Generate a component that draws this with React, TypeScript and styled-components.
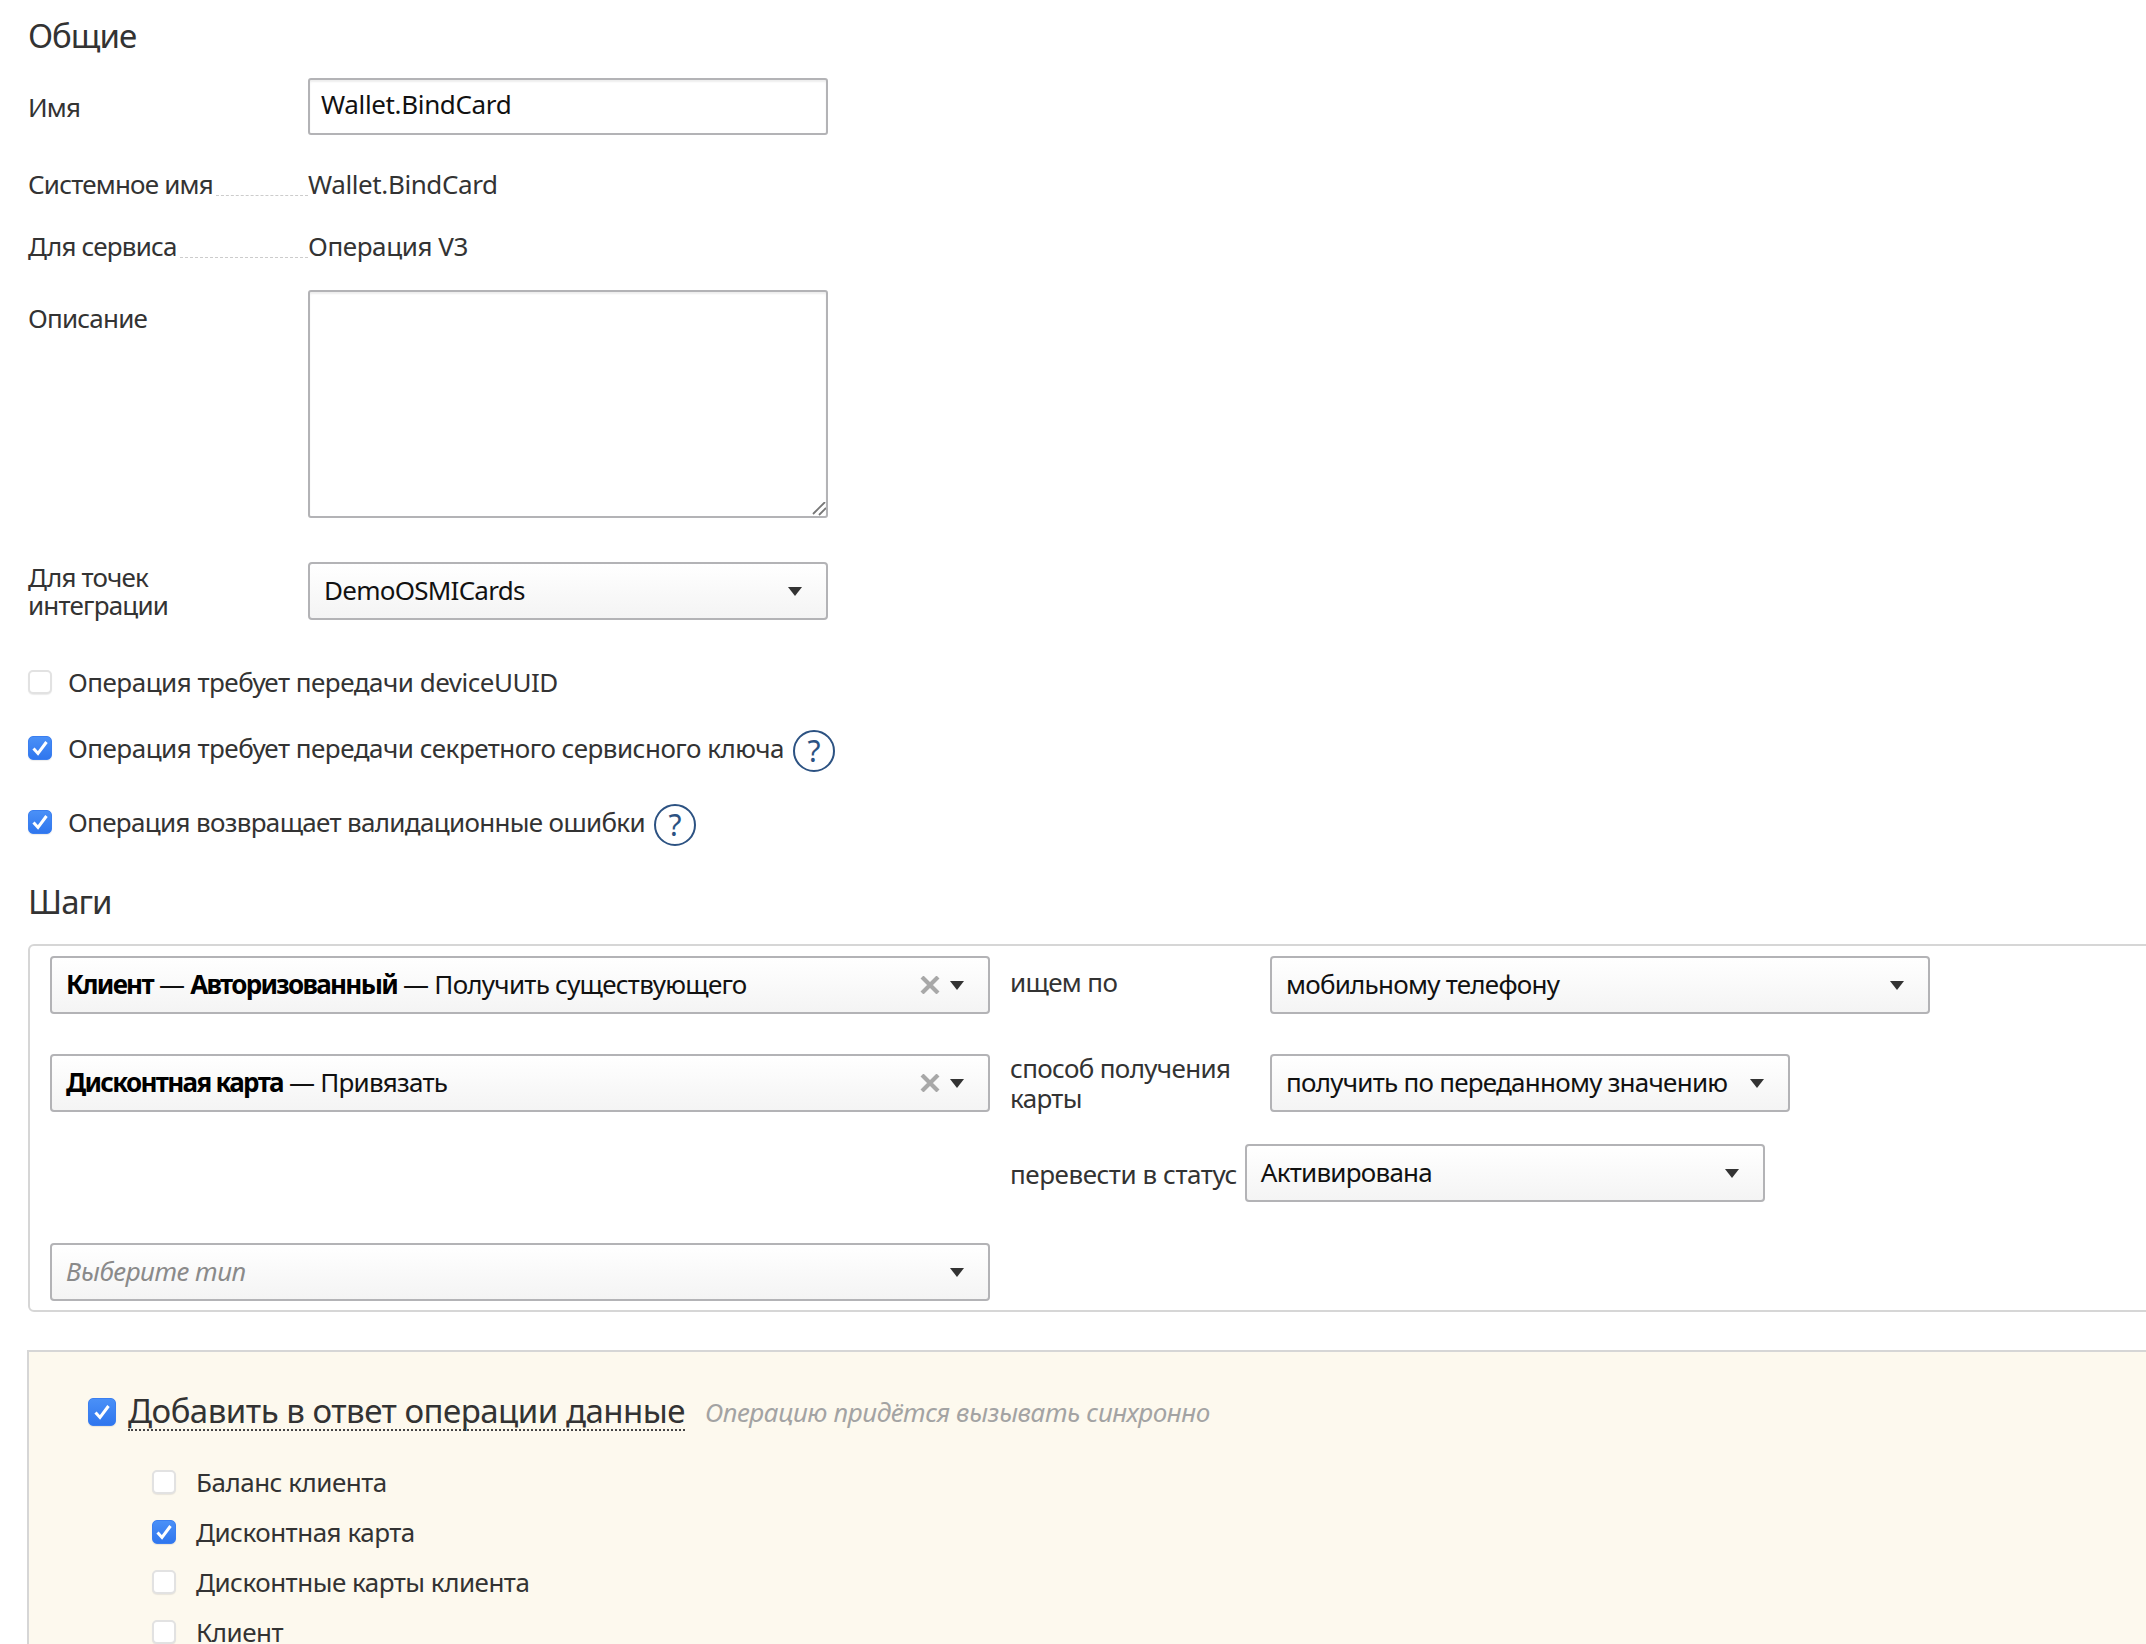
import React from "react";
import styled, { createGlobalStyle } from "styled-components";

const Global = createGlobalStyle`
  html, body { margin: 0; padding: 0; background: #fff; }
  body { font-family: "Noto Sans", "Open Sans", sans-serif; color: #333; overflow: hidden; }
`;

const Page = styled.div`
  height: 1644px;
  overflow: hidden;
  padding-left: 28px;
  font-size: 26px;
  letter-spacing: -0.5px;
`;

const Heading = styled.h2<{ $top: number; $bottom: number }>`
  margin: ${(p) => p.$top}px 0 ${(p) => p.$bottom}px;
  font-size: 33px;
  line-height: 36px;
  font-weight: 400;
  letter-spacing: -1px;
`;

const Row = styled.div<{ $top?: number; $align?: string }>`
  display: flex;
  align-items: ${(p) => p.$align || "center"};
  margin-top: ${(p) => p.$top || 0}px;
`;

const Label = styled.div<{ $pad?: number }>`
  width: 280px;
  flex: none;
  line-height: 28px;
  letter-spacing: -0.8px;
  padding-top: ${(p) => p.$pad || 0}px;
`;

const LeaderRow = styled.div<{ $top: number }>`
  display: flex;
  width: 800px;
  height: 30px;
  line-height: 30px;
  margin-top: ${(p) => p.$top}px;
`;

const LeaderLabel = styled.div`
  display: flex;
  width: 280px;
  flex: none;
  letter-spacing: -0.8px;
  &::after {
    content: "";
    flex: 1;
    margin: 0 0 3px 3px;
    border-bottom: 1px dashed #ccc;
  }
`;

const LeaderValue = styled.div`
  letter-spacing: -0.4px;
`;

const TextInput = styled.div`
  box-sizing: border-box;
  width: 520px;
  height: 57px;
  border: 2px solid #b3b3b6;
  border-radius: 3px;
  box-shadow: inset 0 2px 2px #eee;
  padding: 8px 11px;
  line-height: 32px;
  letter-spacing: -0.35px;
  color: #111;
`;

const TextArea = styled.div`
  box-sizing: border-box;
  position: relative;
  width: 520px;
  height: 228px;
  border: 2px solid #b3b3b6;
  border-radius: 3px;
  box-shadow: inset 0 2px 2px #eee;
`;

const Grip = styled.svg`
  position: absolute;
  right: 0;
  bottom: 0;
`;

const SelectBox = styled.div<{ $w: number }>`
  box-sizing: border-box;
  display: flex;
  align-items: center;
  flex: none;
  width: ${(p) => p.$w}px;
  height: 58px;
  border: 2px solid #b3b3b6;
  border-radius: 4px;
  background: linear-gradient(#fff, #f4f4f4);
  padding: 0 24px 0 14px;
  color: #111;
  letter-spacing: -0.75px;
`;

const SelectText = styled.div`
  flex: 1;
  white-space: nowrap;
  line-height: 30px;
  padding-bottom: 2px;
`;

const Placeholder = styled(SelectText)`
  font-style: italic;
  color: #8a8a8a;
  letter-spacing: -0.45px;
  padding-bottom: 3px;
`;

const Strong = styled.b`
  font-weight: 700;
  color: #000;
  letter-spacing: -1.7px;
`;

const ClearIcon = styled.svg`
  flex: none;
  margin-right: 10px;
`;

const CaretIcon = styled.svg`
  flex: none;
`;

const Caret = () => (
  <CaretIcon width="14" height="9" viewBox="0 0 14 9">
    <path d="M0 0h14L7 9z" fill="#333" />
  </CaretIcon>
);

const Clear = () => (
  <ClearIcon width="20" height="18" viewBox="0 0 20 18">
    <path d="M2 1l16 16M18 1L2 17" stroke="#a8a8a8" strokeWidth="4.2" fill="none" />
  </ClearIcon>
);

const Box = styled.span<{ $on?: boolean; $big?: boolean }>`
  box-sizing: border-box;
  display: inline-flex;
  align-items: center;
  justify-content: center;
  flex: none;
  width: ${(p) => (p.$big ? 28 : 24)}px;
  height: ${(p) => (p.$big ? 28 : 24)}px;
  border-radius: 5px;
  border: ${(p) => (p.$on ? "1px solid #3b7ff0" : "2px solid #e2e2e2")};
  background: ${(p) => (p.$on ? "linear-gradient(#4a90f7, #2f76ee)" : "#fff")};
  box-shadow: 0 1px 1px rgba(0, 0, 0, 0.08);
`;

const Check = ({ on, big }: { on?: boolean; big?: boolean }) => (
  <Box $on={on} $big={big}>
    {on && (
      <svg width="18" height="16" viewBox="0 0 18 16">
        <path d="M2.5 8.5l4.5 5L15.5 2" stroke="#fff" strokeWidth="3" fill="none" />
      </svg>
    )}
  </Box>
);

const CheckRow = styled.div<{ $top: number; $h: number }>`
  display: flex;
  align-items: center;
  height: ${(p) => p.$h}px;
  margin-top: ${(p) => p.$top}px;
  gap: 9px;
`;

const CheckLabel = styled.div<{ $up?: number; $tight?: boolean }>`
  display: flex;
  align-items: center;
  gap: 16px;
  padding-bottom: ${(p) => p.$up || 0}px;
  letter-spacing: ${(p) => (p.$tight ? "-0.67px" : "-0.5px")};
`;

const HelpCircle = styled.span`
  box-sizing: border-box;
  display: inline-flex;
  align-items: center;
  justify-content: center;
  width: 42px;
  height: 42px;
  border: 2px solid #2c5282;
  border-radius: 50%;
  color: #2c5282;
  font-size: 30px;
  letter-spacing: 0;
  padding-bottom: 2px;
`;

const StepsPanel = styled.div`
  box-sizing: border-box;
  width: 2200px;
  border: 2px solid #d6d6d6;
  border-radius: 6px;
  padding: 10px 20px 9px;
`;

const StepRow = styled.div<{ $top?: number }>`
  display: flex;
  align-items: center;
  height: 58px;
  margin-top: ${(p) => p.$top || 0}px;
`;

const StepSpacer = styled.div`
  width: 940px;
  flex: none;
`;

const StepLabel = styled.div<{ $auto?: boolean; $up?: number; $down?: number }>`
  margin-left: 20px;
  width: ${(p) => (p.$auto ? "auto" : "240px")};
  margin-right: ${(p) => (p.$auto ? "8px" : "20px")};
  flex: none;
  line-height: 30px;
  white-space: pre-line;
  letter-spacing: ${(p) => (p.$auto ? "-0.45px" : "-0.65px")};
  padding-bottom: ${(p) => p.$up || 0}px;
  padding-top: ${(p) => p.$down || 0}px;
`;

const ResultPanel = styled.div`
  box-sizing: border-box;
  width: 2200px;
  height: 400px;
  margin: 38px 0 0 -1px;
  border: 2px solid #d6d6d6;
  border-right: none;
  background: #fdf9ee;
  padding: 45px 0 0 59px;
`;

const ResultHead = styled.div`
  display: flex;
  align-items: center;
  height: 30px;
  gap: 12px;
`;

const ResultTitle = styled.span`
  font-size: 33px;
  line-height: 36px;
  letter-spacing: -0.5px;
  border-bottom: 2px dotted #444;
`;

const ResultHint = styled.span`
  font-style: italic;
  color: #a3a3a3;
  margin-left: 8px;
  letter-spacing: -0.4px;
`;

const SubList = styled.div`
  margin: 43px 0 0 64px;
  display: flex;
  flex-direction: column;
  gap: 26px;
`;

const SubRow = styled.div`
  display: flex;
  align-items: center;
  height: 24px;
  gap: 20px;
`;

export default function App() {
  return (
    <Page>
      <Global />
      <Heading $top={18} $bottom={24}>Общие</Heading>
      <Row>
        <Label>Имя</Label>
        <TextInput>Wallet.BindCard</TextInput>
      </Row>
      <LeaderRow $top={34}>
        <LeaderLabel>Системное имя</LeaderLabel>
        <LeaderValue>Wallet.BindCard</LeaderValue>
      </LeaderRow>
      <LeaderRow $top={32}>
        <LeaderLabel>Для сервиса</LeaderLabel>
        <LeaderValue>Операция V3</LeaderValue>
      </LeaderRow>
      <Row $top={29} $align="flex-start">
        <Label $pad={14}>Описание</Label>
        <TextArea>
          <Grip width="14" height="14" viewBox="0 0 14 14">
            <path d="M1 12L13 0M7 13l7-7" stroke="#777" strokeWidth="1.8" fill="none" />
          </Grip>
        </TextArea>
      </Row>
      <Row $top={44}>
        <Label>Для точек<br />интеграции</Label>
        <SelectBox $w={520}>
          <SelectText>DemoOSMICards</SelectText>
          <Caret />
        </SelectBox>
      </Row>
      <CheckRow $top={50} $h={24}>
        <CheckLabel>
          <Check />
          <span>Операция требует передачи deviceUUID</span>
        </CheckLabel>
      </CheckRow>
      <CheckRow $top={36} $h={42}>
        <CheckLabel $up={6}>
          <Check on />
          <span>Операция требует передачи секретного сервисного ключа</span>
        </CheckLabel>
        <HelpCircle>?</HelpCircle>
      </CheckRow>
      <CheckRow $top={32} $h={42}>
        <CheckLabel $up={6} $tight>
          <Check on />
          <span>Операция возвращает валидационные ошибки</span>
        </CheckLabel>
        <HelpCircle>?</HelpCircle>
      </CheckRow>
      <Heading $top={38} $bottom={24}>Шаги</Heading>
      <StepsPanel>
        <StepRow>
          <SelectBox $w={940}>
            <SelectText><Strong>Клиент</Strong> — <Strong>Авторизованный</Strong> — Получить существующего</SelectText>
            <Clear />
            <Caret />
          </SelectBox>
          <StepLabel $up={6}>ищем по</StepLabel>
          <SelectBox $w={660}>
            <SelectText>мобильному телефону</SelectText>
            <Caret />
          </SelectBox>
        </StepRow>
        <StepRow $top={40}>
          <SelectBox $w={940}>
            <SelectText><Strong>Дисконтная карта</Strong> — Привязать</SelectText>
            <Clear />
            <Caret />
          </SelectBox>
          <StepLabel>{"способ получения\nкарты"}</StepLabel>
          <SelectBox $w={520}>
            <SelectText>получить по переданному значению</SelectText>
            <Caret />
          </SelectBox>
        </StepRow>
        <StepRow $top={32}>
          <StepSpacer />
          <StepLabel $auto $down={2}>перевести в статус</StepLabel>
          <SelectBox $w={520}>
            <SelectText>Активирована</SelectText>
            <Caret />
          </SelectBox>
        </StepRow>
        <StepRow $top={41}>
          <SelectBox $w={940}>
            <Placeholder>Выберите тип</Placeholder>
            <Caret />
          </SelectBox>
        </StepRow>
      </StepsPanel>
      <ResultPanel>
        <ResultHead>
          <Check on big />
          <ResultTitle>Добавить в ответ операции данные</ResultTitle>
          <ResultHint>Операцию придётся вызывать синхронно</ResultHint>
        </ResultHead>
        <SubList>
          <SubRow><Check /><span>Баланс клиента</span></SubRow>
          <SubRow><Check on /><span>Дисконтная карта</span></SubRow>
          <SubRow><Check /><span>Дисконтные карты клиента</span></SubRow>
          <SubRow><Check /><span>Клиент</span></SubRow>
        </SubList>
      </ResultPanel>
    </Page>
  );
}
